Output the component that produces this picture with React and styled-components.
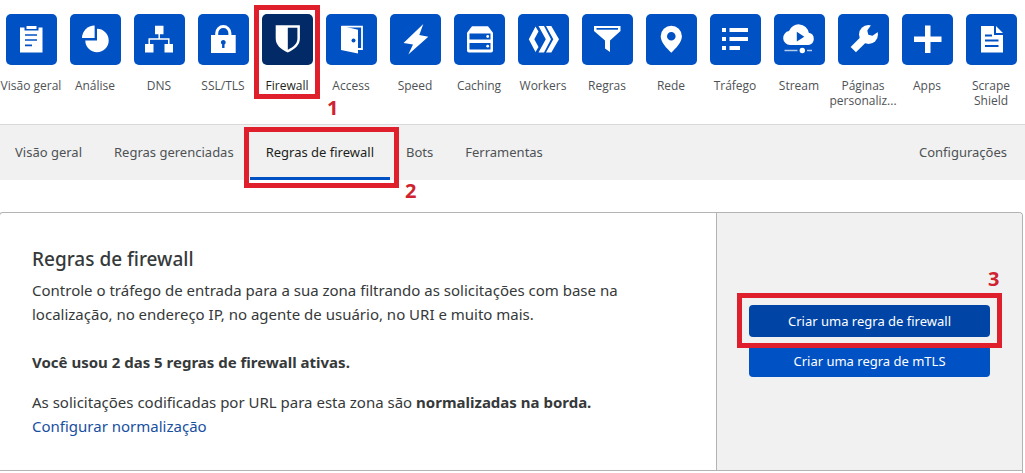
import React from "react";
import styled, { createGlobalStyle } from "styled-components";

const RED = "#e01f2d";
const BLUE = "#0051c3";

const GlobalStyle = createGlobalStyle`
  *, *::before, *::after { box-sizing: border-box; }
  body {
    margin: 0;
    background: #fff;
    color: #36393a;
    font-family: "Noto Sans", "Open Sans", sans-serif;
    font-size: 15px;
    line-height: 24px;
    overflow-x: hidden;
  }
`;

const AppBar = styled.nav`
  display: grid;
  grid-template-columns: repeat(16, minmax(0, 1fr));
  align-items: start;
  margin: 0 2px 0 -1px;
  padding: 14px 0 16px;
`;

const AppLink = styled.a`
  position: relative;
  display: flex;
  flex-direction: column;
  align-items: center;
  gap: 13px;
  color: ${(p) => (p.$active ? "#1d1f20" : "#4e5255")};
  font-family: "Open Sans", "Noto Sans", sans-serif;
  font-size: 12px;
  line-height: 15px;
  text-align: center;
  text-decoration: none;
`;

const Tile = styled.span`
  display: block;
  width: 51px;
  height: 51px;
  border-radius: 5px;
  background: ${(p) => (p.$active ? "#012a66" : BLUE)};
  color: ${(p) => (p.$active ? "#012a66" : BLUE)};

  svg { display: block; }
`;

const AppLabel = styled.span`
  white-space: pre;
`;

const Marker = styled.span`
  position: absolute;
  inset: ${(p) => p.$inset};
  border: 5px solid ${RED};
  pointer-events: none;
  z-index: 2;
`;

const Step = styled.span`
  position: absolute;
  left: ${(p) => p.$left};
  top: ${(p) => p.$top};
  color: #cf2430;
  font-family: "Noto Sans", "Open Sans", sans-serif;
  font-size: 20px;
  font-weight: 700;
  line-height: 24px;
`;

const TabBar = styled.nav`
  display: flex;
  border-top: 1px solid #d9d9d9;
  background: #f1f1f1;
  padding: 0 2px 0 0;
  margin-left: -1px;
`;

const Tab = styled.a`
  position: relative;
  padding: 17px 16px 14px;
  border-bottom: 3px solid ${(p) => (p.$active ? BLUE : "transparent")};
  color: ${(p) => (p.$active ? "#1d1f20" : "#4e5255")};
  font-size: 13px;
  line-height: 21px;
  text-decoration: none;
  white-space: nowrap;

  &:last-child { margin-left: auto; }
`;

const Card = styled.section`
  margin: 32px 2px 0 -1px;
  border: 1px solid #b3b3b3;
  border-bottom: 0;
  border-radius: 4px 4px 0 0;
`;

const CardBody = styled.div`
  display: grid;
  grid-template-columns: minmax(0, 1fr) 306px;
  border-bottom: 1px solid #b3b3b3;
`;

const CardFooter = styled.div`
  height: 2px;
`;

const Description = styled.div`
  padding: 32px;

  p { margin: 0; }
  p + p { margin-top: 24px; }
  p + p + p { margin-top: 16px; }
`;

const Title = styled.h1`
  margin: 0 0 5px;
  font-size: 19px;
  font-weight: 500;
  line-height: 28px;
`;

const TextLink = styled.a`
  color: #17509f;
  text-decoration: none;
`;

const Actions = styled.div`
  display: flex;
  flex-direction: column;
  justify-content: center;
  gap: 8px;
  padding: 32px 32px 34px;
  border-left: 1px solid #b3b3b3;
  border-radius: 0 4px 0 0;
  background: #f1f1f1;
`;

const ActionItem = styled.div`
  position: relative;
  display: grid;
`;

const Button = styled.button`
  height: 32px;
  border: 0;
  border-radius: 4px;
  background: ${(p) => (p.$pressed ? "#0045a6" : BLUE)};
  color: #fff;
  font: inherit;
  font-size: 13px;
`;

const icons = {
  clipboard: (
    <>
      <path fill="#fff" d="M14 13.500h4.500v3h14v-3h4v25H14z" />
      <path fill="#fff" d="M20.500 12h10v3h-10z" />
      <path stroke="currentColor" strokeWidth="1.700" d="M19 21h12M19 26h12M19 31.300h7" />
    </>
  ),
  pie: (
    <>
      <path fill="#fff" d="M27 26.500V14.800A11.700 11.700 0 1 1 15.300 26.500z" />
      <path fill="#fff" d="M24.600 24V11.500A12.500 12.500 0 0 0 12 24z" />
    </>
  ),
  network: (
    <>
      <path fill="#fff" d="M21 11.700h8.500v8.500H21zM11 30h8.500v8.500H11zM30.500 30H39v8.500h-8.500z" />
      <path fill="none" stroke="#fff" strokeWidth="1.500" d="M25.200 20v5M15.200 30v-5h19.600v5" />
    </>
  ),
  lock: (
    <>
      <path fill="#fff" d="M13 21h24.700v18H13z" />
      <path fill="none" stroke="#fff" strokeWidth="3" d="M18.700 21.500v-2.300a6.600 6.600 0 0 1 13.200 0v2.300" />
      <path fill="currentColor" d="M25.300 26a2.400 2.400 0 0 1 1.200 4.500V34h-2.400v-3.500a2.400 2.400 0 0 1 1.200-4.500z" />
    </>
  ),
  shield: (
    <>
      <path fill="#fff" d="M13.700 11.300h24.200v13.200c0 6.500-4.800 10.500-12.100 14-7.300-3.500-12.100-7.500-12.100-14z" />
      <path fill="currentColor" d="M25.800 13.800h9.600v10.700c0 5-3.500 8.200-9.600 11.200z" />
    </>
  ),
  door: (
    <>
      <path fill="none" stroke="#fff" strokeWidth="1.800" d="M16 12.700h20v22.300h-5" />
      <path fill="#fff" d="M15 11.800l17 4V39.500l-17-3.500z" />
      <circle cx="27.500" cy="26.500" r="2" fill="currentColor" />
    </>
  ),
  bolt: <path fill="#fff" d="M33.300 10L13.500 29l9.500 1.500L18.300 40.500 38.300 22.800l-9-1.800z" />,
  server: (
    <>
      <path fill="#fff" d="M18 12.200h16l5 6.500v17.800a2 2 0 0 1-2 2H15a2 2 0 0 1-2-2V18.700z" />
      <path fill="currentColor" d="M15.500 19.500h21v6h-21zM15.500 29h21v6.500h-21z" />
      <circle cx="33.700" cy="22.500" r="1.400" fill="#fff" />
      <circle cx="33.700" cy="32.200" r="1.400" fill="#fff" />
    </>
  ),
  workers: (
    <>
      <path fill="#fff" d="M17.500 12.500l3 5-4.200 7.800 4.200 7.800-3 5L10.800 25.300z" />
      <path fill="#fff" d="M20.500 12H26l7 13.300-7 13.200h-5.500l7.300-13.200z" />
      <path fill="#fff" d="M28 12h5.300L41 25.300l-7.700 13.200H28l7.300-13.200z" />
    </>
  ),
  funnel: (
    <>
      <path fill="#fff" d="M12 12h26.500v5L28 26.500V38l-5-3.500v-8L12 17z" />
      <path fill="currentColor" d="M14.500 14h21.500v1.700H14.500z" />
    </>
  ),
  pin: (
    <path fill="#fff" fillRule="evenodd" d="M25.300 11.700a10.600 10.600 0 0 1 10.600 10.500c0 6-6 12-10.600 16.500-4.600-4.500-10.600-10.500-10.600-16.500a10.600 10.600 0 0 1 10.600-10.500zm0 6.300a4.300 4.300 0 1 0 0 8.600 4.300 4.300 0 0 0 0-8.600z" />
  ),
  list: <path fill="#fff" d="M12 14h4v4h-4zM19.500 14H38v4H19.500zM12 23h4v4h-4zM19.500 23H38v4H19.500zM12 32h4v4h-4zM19.500 32H30v4H19.500z" />,
  stream: (
    <>
      <path fill="#fff" d="M16 31a7 7 0 0 1-1-13.900 10.300 10.300 0 0 1 19.800 1.700 6.200 6.200 0 0 1-.2 12.200z" />
      <path fill="currentColor" d="M22.800 17.800l7.500 4.900-7.500 4.900z" />
      <path stroke="#fff" strokeOpacity=".7" strokeWidth="1.500" d="M10.500 36.500h13M33 36.500h5" />
      <circle cx="28.300" cy="36.500" r="2.700" fill="#fff" />
    </>
  ),
  wrench: (
    <>
      <circle cx="30.500" cy="20.500" r="9.500" fill="#fff" />
      <path stroke="#fff" strokeWidth="7.500" d="M28 23L15.300 35.700" />
      <path fill="currentColor" d="M34.500 9l-5.200 7.500 1 4.200 4.200 1 7.500-5.200V9z" />
    </>
  ),
  plus: <path fill="#fff" d="M23 11.500h5.500v11h11v5.500h-11v11H23V28H12v-5.500h11z" />,
  document: (
    <>
      <path fill="#fff" d="M15 12h13v9h9v17.500H15zM30 12l7 7h-7z" />
      <path stroke="currentColor" strokeWidth="2" d="M19 21.500h7M19 26.500h13.500M19 32h13.500" />
    </>
  ),
};

const apps = [
  ["clipboard", "Visão geral"],
  ["pie", "Análise"],
  ["network", "DNS"],
  ["lock", "SSL/TLS"],
  ["shield", "Firewall"],
  ["door", "Access"],
  ["bolt", "Speed"],
  ["server", "Caching"],
  ["workers", "Workers"],
  ["funnel", "Regras"],
  ["pin", "Rede"],
  ["list", "Tráfego"],
  ["stream", "Stream"],
  ["wrench", "Páginas\npersonaliz..."],
  ["plus", "Apps"],
  ["document", "Scrape\nShield"],
];

const tabs = ["Visão geral", "Regras gerenciadas", "Regras de firewall", "Bots", "Ferramentas", "Configurações"];

export default function App() {
  return (
    <>
      <GlobalStyle />
      <AppBar aria-label="Aplicativos">
        {apps.map(([icon, label]) => {
          const active = label === "Firewall";
          return (
            <AppLink key={label} href="#" $active={active}>
              <Tile $active={active}>
                <svg width="51" height="51" viewBox="0 0 51 51" aria-hidden="true">{icons[icon]}</svg>
              </Tile>
              <AppLabel>{label}</AppLabel>
              {active && (
                <>
                  <Marker $inset="-9px -1px -6px" />
                  <Step $left="calc(100% + 8px)" $top="82px">1</Step>
                </>
              )}
            </AppLink>
          );
        })}
      </AppBar>
      <TabBar aria-label="Firewall">
        {tabs.map((label) => {
          const active = label === "Regras de firewall";
          return (
            <Tab key={label} href="#" $active={active}>
              {label}
              {active && (
                <>
                  <Marker $inset="2px -9px -11px -6px" />
                  <Step $left="calc(100% + 15px)" $top="54px">2</Step>
                </>
              )}
            </Tab>
          );
        })}
      </TabBar>
      <main>
        <Card>
          <CardBody>
            <Description>
              <Title>Regras de firewall</Title>
              <p>
                Controle o tráfego de entrada para a sua zona filtrando as solicitações com base na
                localização, no endereço IP, no agente de usuário, no URI e muito mais.
              </p>
              <p><strong>Você usou 2 das 5 regras de firewall ativas.</strong></p>
              <p>
                As solicitações codificadas por URL para esta zona são <strong>normalizadas na borda.</strong>
                <br />
                <TextLink href="#">Configurar normalização</TextLink>
              </p>
            </Description>
            <Actions>
              <ActionItem>
                <Button type="button" $pressed>Criar uma regra de firewall</Button>
                <Marker $inset="-12px -12px -11px" />
                <Step $left="calc(100% - 2px)" $top="-38px">3</Step>
              </ActionItem>
              <ActionItem>
                <Button type="button">Criar uma regra de mTLS</Button>
              </ActionItem>
            </Actions>
          </CardBody>
          <CardFooter />
        </Card>
      </main>
    </>
  );
}
